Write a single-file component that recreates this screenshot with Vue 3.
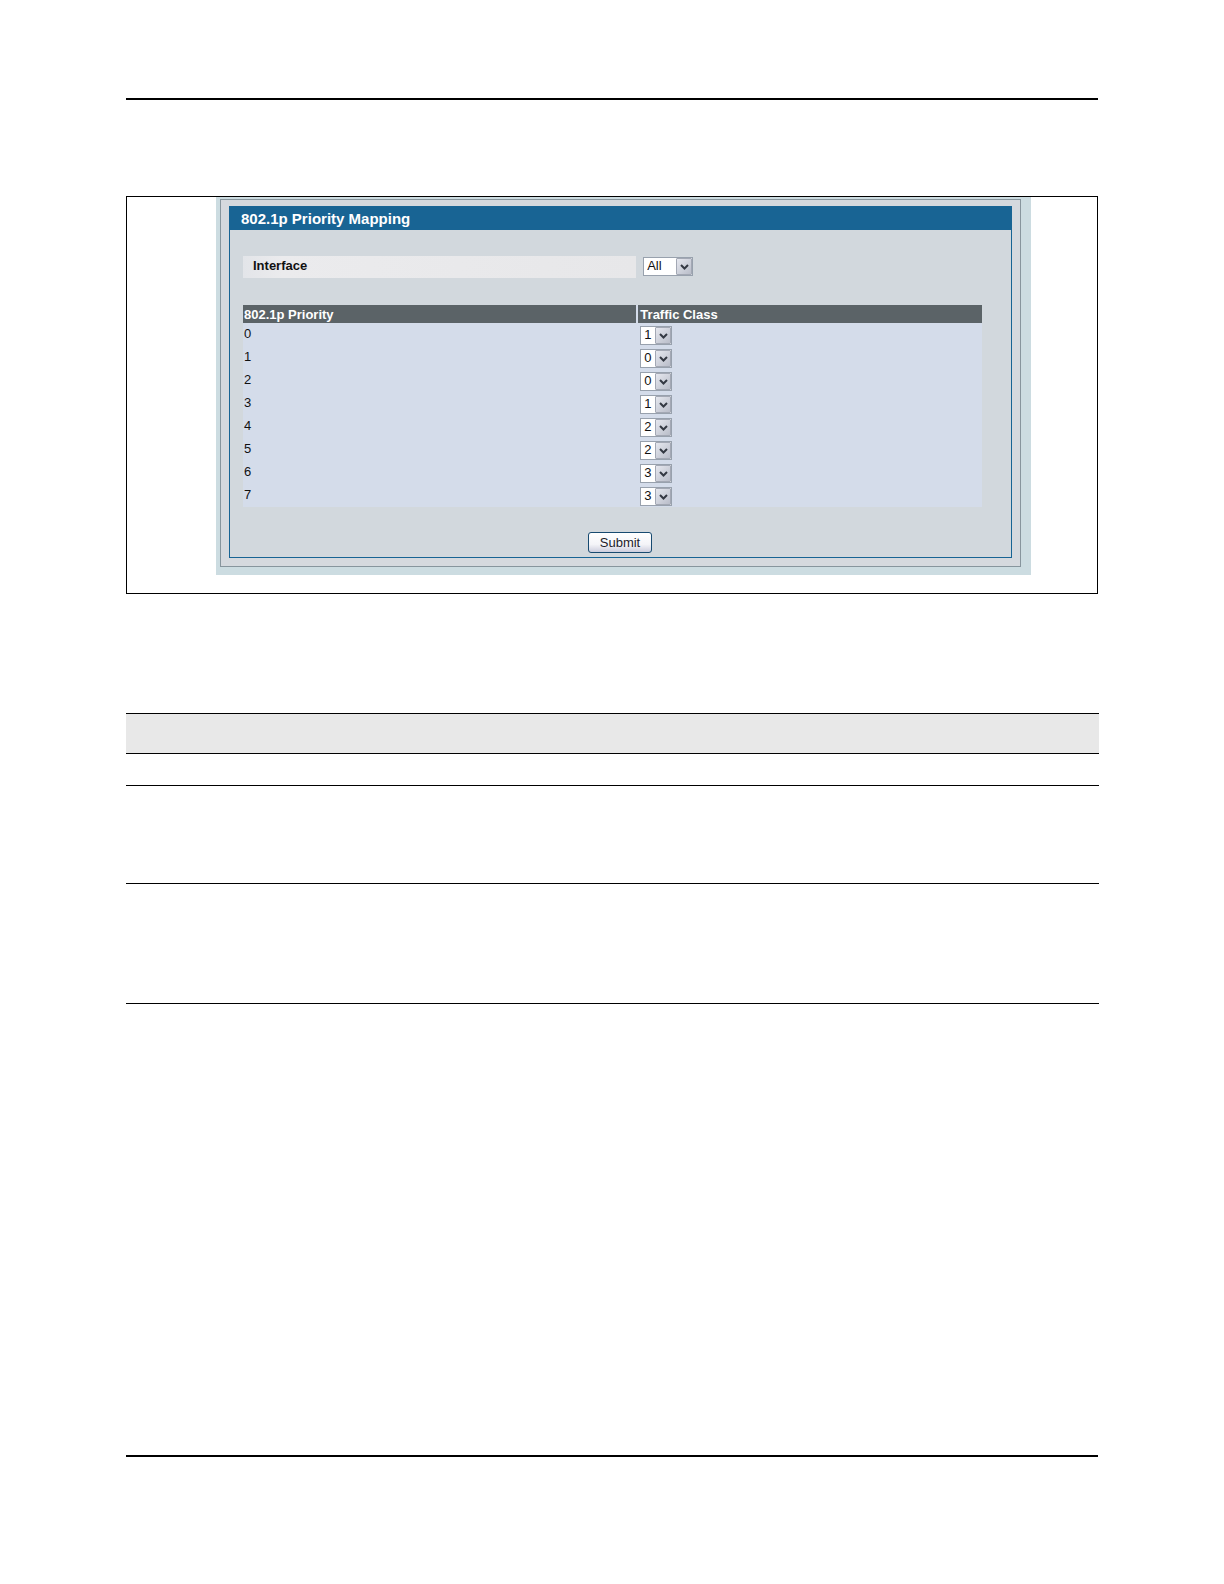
<script setup>
import { ref } from 'vue'

const selectedInterface = ref('All')
const classes = ['0', '1', '2', '3']
const rows = ref([
  { priority: 0, trafficClass: '1' },
  { priority: 1, trafficClass: '0' },
  { priority: 2, trafficClass: '0' },
  { priority: 3, trafficClass: '1' },
  { priority: 4, trafficClass: '2' },
  { priority: 5, trafficClass: '2' },
  { priority: 6, trafficClass: '3' },
  { priority: 7, trafficClass: '3' },
])
</script>

<template>
  <main class="page">
    <hr class="rule" />

    <section class="figure">
      <div class="backdrop">
        <div class="outer">
          <form class="panel" @submit.prevent>
            <h1 class="title">802.1p Priority Mapping</h1>
            <div class="content">
              <div class="field">
                <label class="field-label" for="interface">Interface</label>
                <span class="picker picker-wide">
                  <select id="interface" v-model="selectedInterface">
                    <option>All</option>
                  </select>
                  <span class="arrow">
                    <svg viewBox="0 0 9 6" width="9" height="6"><path d="M1 1l3.500 3.500L8 1" /></svg>
                  </span>
                </span>
              </div>

              <table class="mapping">
                <thead>
                  <tr>
                    <th class="col-priority" scope="col">802.1p Priority</th>
                    <th scope="col">Traffic Class</th>
                  </tr>
                </thead>
                <tbody>
                  <tr v-for="row in rows" :key="row.priority">
                    <td><label :for="'class-' + row.priority">{{ row.priority }}</label></td>
                    <td class="cell-class">
                      <span class="picker">
                        <select :id="'class-' + row.priority" v-model="row.trafficClass">
                          <option v-for="c in classes" :key="c">{{ c }}</option>
                        </select>
                        <span class="arrow">
                          <svg viewBox="0 0 9 6" width="9" height="6"><path d="M1 1l3.500 3.500L8 1" /></svg>
                        </span>
                      </span>
                    </td>
                  </tr>
                </tbody>
              </table>

              <button class="submit" type="submit">Submit</button>
            </div>
          </form>
        </div>
      </div>
    </section>

    <section class="ruled">
      <div class="ruled-head"></div>
      <div class="ruled-row"></div>
      <div class="ruled-row medium"></div>
      <div class="ruled-row tall"></div>
    </section>

    <hr class="rule rule-bottom" />
  </main>
</template>

<style>
body {
  background: #fff;
}
</style>

<style scoped>
* {
  box-sizing: border-box;
}

.page {
  display: flex;
  flex-direction: column;
  min-height: 100vh;
  padding: 98px 126px 127px;
  font-family: "Liberation Sans", Arial, sans-serif;
  font-size: 13px;
  color: #111;
}

.rule {
  width: 100%;
  height: 2px;
  margin: 0;
  border: 0;
  background: #000;
}

.rule-bottom {
  margin-top: auto;
}

.figure {
  margin-top: 96px;
  padding: 0 66px 18px 89px;
  border: 1px solid #000;
}

.backdrop {
  padding: 2px 10px 8px 4px;
  background: #ccdce1;
}

.outer {
  padding: 6px 8px 8px;
  border: 1px solid #87959d;
  background: #d5d9de;
}

.panel {
  border: 1px solid #186494;
  background: #d2d8dd;
}

.title {
  height: 23px;
  margin: 0;
  padding-left: 11px;
  background: #186494;
  color: #fff;
  font-size: 15px;
  font-weight: bold;
  line-height: 24px;
}

.content {
  display: flex;
  flex-direction: column;
  padding: 26px 29px 4px 13px;
}

.field {
  display: flex;
  gap: 7px;
  height: 22px;
}

.field-label {
  width: 53.2%;
  padding-left: 10px;
  background: linear-gradient(90deg, #e3e5e9, #ebebed 10%, #e7e7e9);
  font-weight: bold;
  line-height: 19px;
}

.mapping {
  width: 100%;
  margin-top: 27px;
  border-collapse: separate;
  border-spacing: 0;
  table-layout: fixed;
  background: #d4dcea;
}

.mapping th {
  height: 18px;
  padding: 0 2px;
  background: #5b6367;
  color: #fff;
  line-height: 17px;
  text-align: left;
}

.mapping .col-priority {
  width: 53.5%;
  padding: 0 1px;
  border-right: 2px solid #d4dcea;
}

.mapping td {
  height: 23px;
  padding: 0 1px;
  line-height: 22px;
  vertical-align: top;
}

.mapping .cell-class {
  padding: 3px 2px 0;
}

.picker {
  position: relative;
  display: block;
  width: 32px;
  height: 19px;
}

.picker-wide {
  width: 50px;
  margin-top: 1px;
}

.picker select {
  display: block;
  width: 100%;
  height: 100%;
  margin: 0;
  padding: 0 0 1px 3px;
  border: 1px solid #98a1ad;
  border-radius: 0;
  appearance: none;
  background: #fff;
  color: #111;
  font: inherit;
  line-height: 16px;
}

.arrow {
  position: absolute;
  top: 1px;
  right: 1px;
  bottom: 1px;
  display: flex;
  align-items: center;
  justify-content: center;
  width: 16px;
  border: 1px solid #a3a8b4;
  border-radius: 1px;
  background: linear-gradient(135deg, #e6e8ef, #b9bdc9);
  pointer-events: none;
}

.arrow path {
  fill: none;
  stroke: #343943;
  stroke-width: 2;
}

.submit {
  align-self: center;
  width: 64px;
  height: 21px;
  margin: 25px 0 0 15px;
  padding: 0;
  border: 1px solid #174a70;
  border-radius: 3px;
  background: linear-gradient(#fff, #f4f4f8 60%, #cccddd);
  color: #1d1d2a;
  font: inherit;
}

.ruled {
  margin: 119px -1px 0 0;
}

.ruled-head {
  height: 41px;
  border-top: 1px solid #000;
  border-bottom: 1px solid #000;
  background: #e8e8e8;
}

.ruled-row {
  height: 32px;
  border-bottom: 1px solid #000;
}

.ruled-row.medium {
  height: 98px;
}

.ruled-row.tall {
  height: 120px;
}
</style>
